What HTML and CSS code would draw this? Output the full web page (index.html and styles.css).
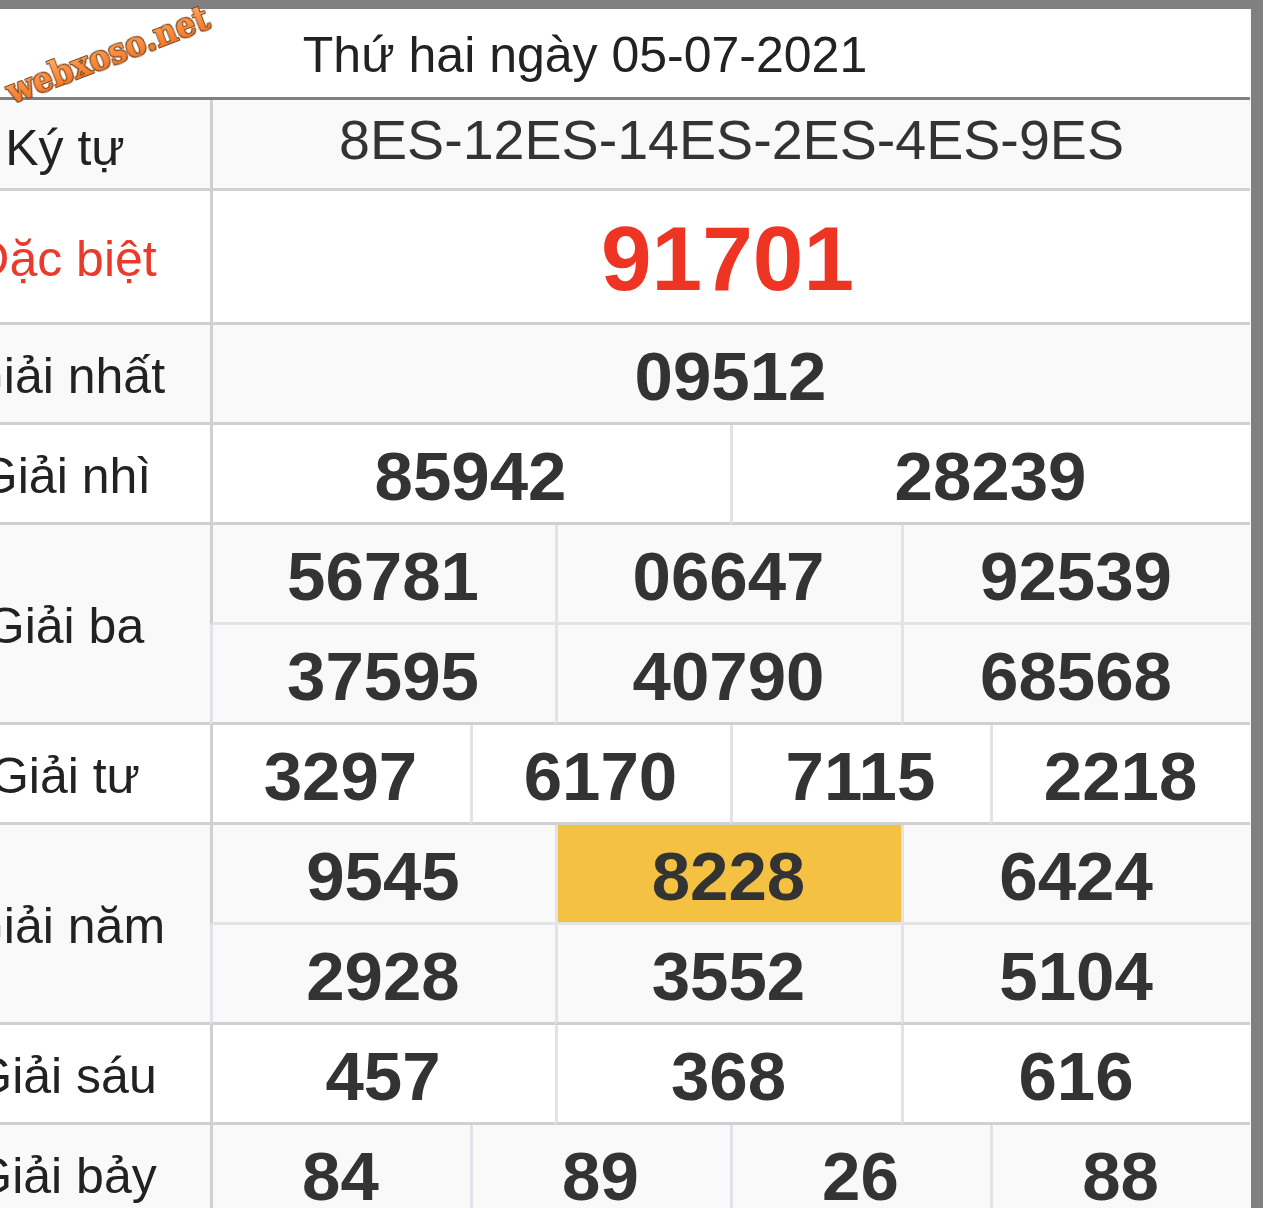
FILE: index.html
```html
<!DOCTYPE html>
<html lang="vi">
<head>
<meta charset="utf-8">
<title>Kết quả xổ số</title>
<link rel="stylesheet" href="styles.css">
</head>
<body>
<main class="frame">
  <svg class="logo" width="230" height="112" viewBox="0 0 230 112" aria-label="webxoso.net">
    <defs>
      <linearGradient id="logoFill" x1="0" y1="0" x2="0" y2="1">
        <stop offset="0" stop-color="#ffb878"/>
        <stop offset="0.5" stop-color="#fb8f42"/>
        <stop offset="1" stop-color="#f06c18"/>
      </linearGradient>
      <filter id="logoFat" x="-5%" y="-20%" width="110%" height="140%">
        <feMorphology in="SourceGraphic" operator="dilate" radius="0.3" result="fat"/>
        <feMorphology in="SourceAlpha" operator="dilate" radius="1.1" result="wide"/>
        <feFlood flood-color="#70401a"/>
        <feComposite in2="wide" operator="in" result="edge"/>
        <feMerge>
          <feMergeNode in="edge"/>
          <feMergeNode in="fat"/>
        </feMerge>
      </filter>
    </defs>
    <text class="logo-text" x="0" y="0" textLength="214" lengthAdjust="spacingAndGlyphs" filter="url(#logoFat)" transform="translate(12 104) rotate(-21)">webxoso.net</text>
  </svg>
  <table class="results">
    <colgroup>
      <col class="col-label">
      <col class="col-unit" span="3">
      <col class="col-a">
      <col class="col-b" span="2">
      <col class="col-c" span="2">
      <col class="col-d">
      <col class="col-unit" span="3">
    </colgroup>
    <tbody>
      <tr class="row-head"><th colspan="13" class="date">Thứ hai ngày 05-07-2021</th></tr>
      <tr class="row-code odd"><td class="label">Ký tự</td><td colspan="12" class="code">8ES-12ES-14ES-2ES-4ES-9ES</td></tr>
      <tr class="row-special"><td class="label red">Đặc biệt</td><td colspan="12" class="special">91701</td></tr>
      <tr class="row odd"><td class="label">Giải nhất</td><td colspan="12" class="num">09512</td></tr>
      <tr class="row"><td class="label">Giải nhì</td><td colspan="6" class="num">85942</td><td colspan="6" class="num">28239</td></tr>
      <tr class="row odd inner"><td class="label" rowspan="2">Giải ba</td><td colspan="4" class="num">56781</td><td colspan="4" class="num">06647</td><td colspan="4" class="num">92539</td></tr>
      <tr class="row odd"><td colspan="4" class="num">37595</td><td colspan="4" class="num">40790</td><td colspan="4" class="num">68568</td></tr>
      <tr class="row"><td class="label">Giải tư</td><td colspan="3" class="num">3297</td><td colspan="3" class="num">6170</td><td colspan="3" class="num">7115</td><td colspan="3" class="num">2218</td></tr>
      <tr class="row odd inner"><td class="label" rowspan="2">Giải năm</td><td colspan="4" class="num">9545</td><td colspan="4" class="num hit">8228</td><td colspan="4" class="num">6424</td></tr>
      <tr class="row odd"><td colspan="4" class="num">2928</td><td colspan="4" class="num">3552</td><td colspan="4" class="num">5104</td></tr>
      <tr class="row"><td class="label">Giải sáu</td><td colspan="4" class="num">457</td><td colspan="4" class="num">368</td><td colspan="4" class="num">616</td></tr>
      <tr class="row odd"><td class="label">Giải bảy</td><td colspan="3" class="num">84</td><td colspan="3" class="num">89</td><td colspan="3" class="num">26</td><td colspan="3" class="num">88</td></tr>
    </tbody>
  </table>
</main>
</body>
</html>
```
FILE: styles.css
```css
html, body {
  margin: 0;
  padding: 0;
  background: #fff;
  overflow: hidden;
}
body {
  width: 1271px;
  height: 1208px;
  font-family: "Liberation Sans", Arial, sans-serif;
}
.frame {
  position: relative;
  box-sizing: border-box;
  width: 1263px;
  height: 1208px;
  border-top: 9px solid #808080;
  border-right: 12px solid #808080;
}
.logo {
  position: absolute;
  left: 0;
  top: -9px;
  z-index: 2;
}
.logo-text {
  font-family: "DejaVu Serif", serif;
  font-weight: 700;
  font-size: 36px;
  fill: url(#logoFill);
}
.results {
  table-layout: fixed;
  border-collapse: separate;
  border-spacing: 0;
  width: 1331px;
  margin-left: -80px;
  border-right: 1px solid #f9f9f9;
}
.col-label { width: 290px; }
.col-unit { width: 86.667px; }
.col-a { width: 85px; }
.col-b { width: 87.5px; }
.col-c { width: 85.5px; }
.col-d { width: 89px; }
td, th {
  padding: 0;
  box-sizing: border-box;
  text-align: center;
  vertical-align: middle;
  border-bottom: 3px solid #d0d0d2;
}
td + td, .code, .special, .num {
  border-left: 3px solid #e2e2e8;
}
.row-head { height: 91px; }
.row-code { height: 91px; }
.row-special { height: 134px; }
.row { height: 100px; }
.odd td { background: #f9f9f9; }
.date {
  font-weight: 400;
  font-size: 50px;
  line-height: 84px;
  padding-top: 4px;
  color: #222;
  border-bottom-color: #808080;
}
.label {
  font-size: 50px;
  color: #222;
  padding-top: 4px;
}
.row-code .label { padding-top: 8px; }
.red { color: #ea3a2c; }
.code {
  font-size: 55.6px;
  color: #333;
  padding-bottom: 8px;
  border-left-color: #cfcfcf;
}
.special {
  font-size: 91px;
  font-weight: 700;
  color: #ee3524;
  padding-top: 5px;
  padding-right: 8px;
}
.num {
  font-size: 69px;
  font-weight: 700;
  color: #333;
  padding-top: 6px;
  padding-right: 2px;
}
.row .label + .num, .row-special .label + .special {
  border-left-color: #d0d0d2;
}
.inner td:not(.label) { border-bottom-color: #e4e4e8; }
.odd td.hit { background: #f4c142; }
```
